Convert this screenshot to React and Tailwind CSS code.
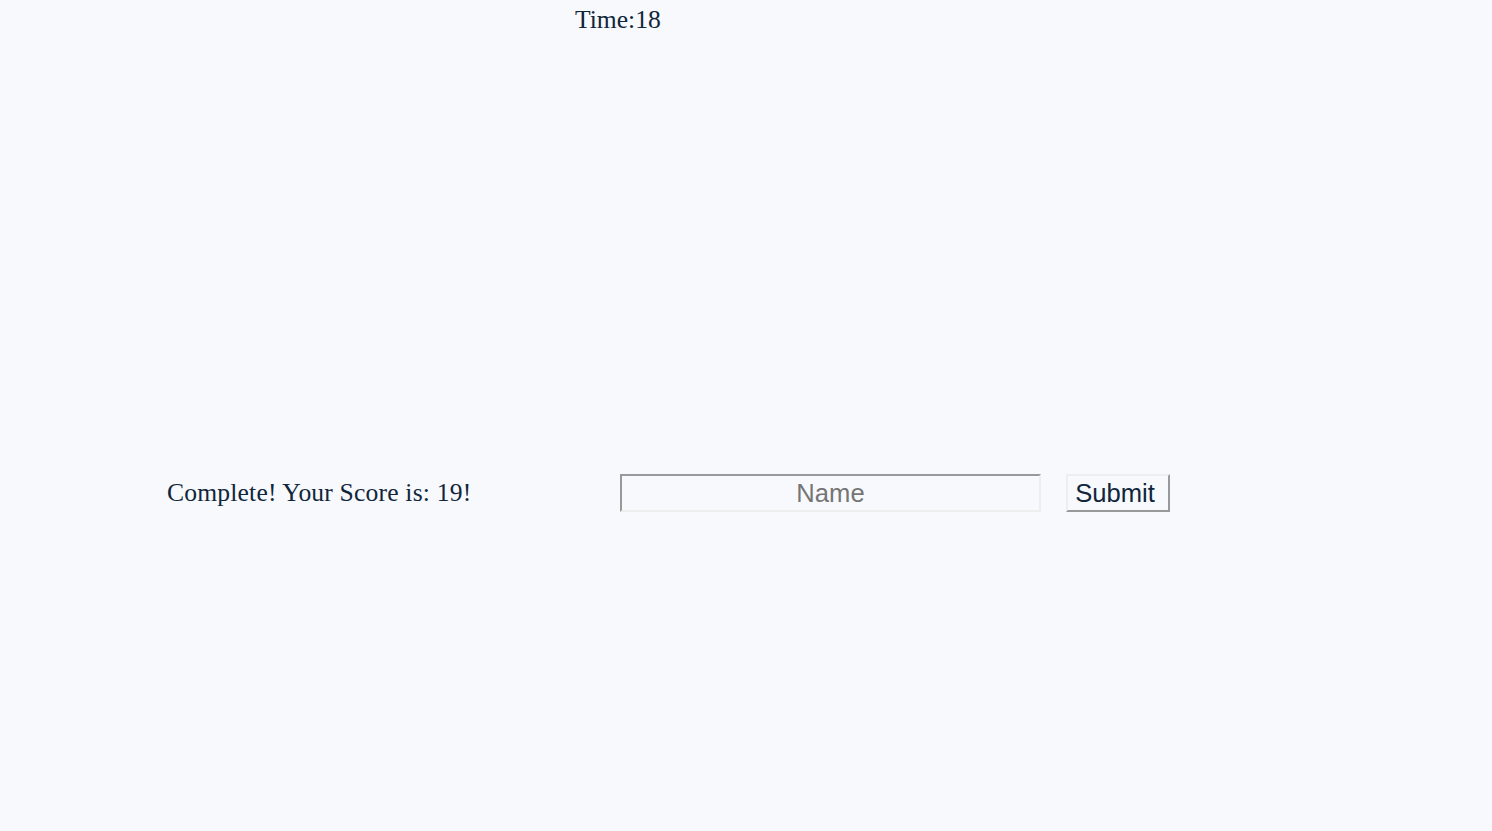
export default function App() {
  return (
    <div className="min-h-screen bg-[#f8f9fd] text-[#10263b]">
      <div className="pl-[575px] pt-[5px] font-['Liberation_Serif',serif] text-[25.6px] leading-[29px]">
        Time:18
      </div>
      <div className="mt-[440px] flex items-center">
        <div className="ml-[167px] mb-[2px] w-[453px] font-['Liberation_Serif',serif] text-[25.6px] leading-[29px] tracking-[0.18px]">
          Complete! Your Score is: 19!
        </div>
        <input
          type="text"
          placeholder="Name"
          className="h-[38px] w-[421px] border-2 border-t-[#999] border-l-[#999] border-b-[#eee] border-r-[#eee] bg-transparent text-center font-['Liberation_Sans',sans-serif] text-[25.6px] placeholder:text-[#757575] outline-none"
        />
        <button className="ml-[25px] h-[38px] w-[104px] border-2 border-t-[#eee] border-l-[#eee] border-b-[#999] border-r-[#999] bg-[#f8f9fd] pr-[6px] pt-[2px] font-['Liberation_Sans',sans-serif] text-[25.6px] leading-none text-[#10263b]">
          Submit
        </button>
      </div>
    </div>
  );
}
